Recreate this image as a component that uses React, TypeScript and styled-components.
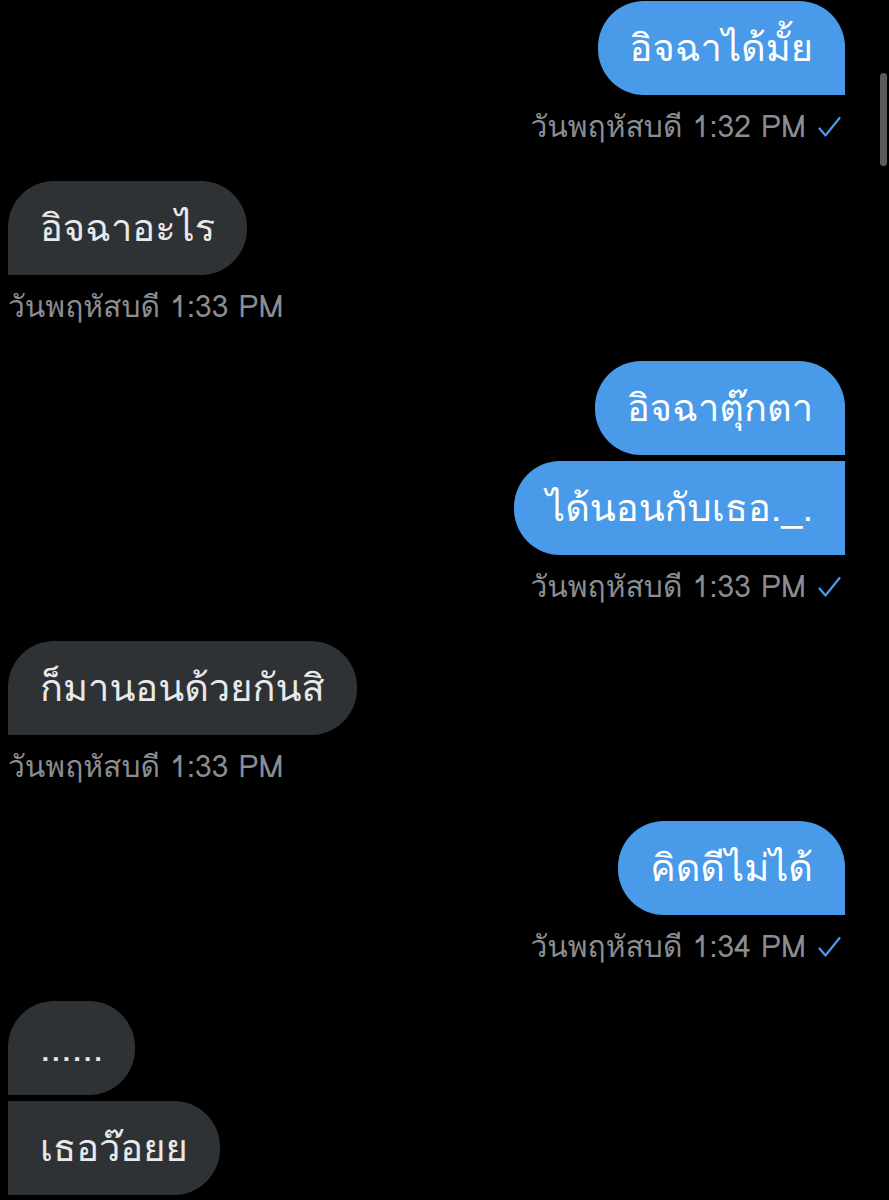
import React from 'react'
import styled, { createGlobalStyle, css } from 'styled-components'

const GlobalStyle = createGlobalStyle`
  html, body {
    margin: 0;
    padding: 0;
    background: #000;
  }
  body {
    font-family: "Loma", "Garuda", "Noto Sans Thai Looped", "Noto Sans Thai", "Noto Sans", "Liberation Sans", sans-serif;
    -webkit-font-smoothing: antialiased;
  }
`

const BLUE = '#4a9aea'
const GREY = '#2f3235'

type Side = 'me' | 'them'
type Place = 'single' | 'first' | 'last'

const Screen = styled.div`
  position: relative;
  width: 889px;
  height: 1200px;
  overflow: hidden;
  background: #000;
`

const Thread = styled.div`
  display: flex;
  flex-direction: column;
  padding: 1px 44px 0 8px;
`

const Group = styled.div<{ $side: Side }>`
  display: flex;
  flex-direction: column;
  gap: 6px;
  align-items: ${({ $side }) => ($side === 'me' ? 'flex-end' : 'flex-start')};
  margin-bottom: 37px;
`

const R = '46px'

const Bubble = styled.div<{ $side: Side; $place: Place }>`
  box-sizing: border-box;
  height: 94px;
  padding: 0 32px;
  display: flex;
  align-items: center;
  font-size: 38px;
  line-height: 1;
  white-space: nowrap;
  color: ${({ $side }) => ($side === 'me' ? '#fff' : '#e7e9ea')};
  background: ${({ $side }) => ($side === 'me' ? BLUE : GREY)};
  border-radius: ${R};
  ${({ $side, $place }) =>
    $side === 'me'
      ? css`
          border-bottom-right-radius: 0;
          ${$place === 'last' && `border-top-right-radius: 0;`}
        `
      : css`
          border-bottom-left-radius: 0;
          ${$place === 'last' && `border-top-left-radius: 0;`}
        `}
`

const Meta = styled.div`
  display: flex;
  align-items: center;
  gap: 12px;
  height: 34px;
  margin-top: 9px;
  font-size: 30px;
  line-height: 34px;
  color: #8a8d91;
  white-space: nowrap;
`

const Scrollbar = styled.div`
  position: absolute;
  top: 73px;
  right: 2px;
  width: 7px;
  height: 93px;
  border-radius: 4px;
  background: #5b5b5d;
`

const Check = () => (
  <svg width="27" height="22" viewBox="0 0 27 22" fill="none">
    <path d="M1.5 12.5 L7.5 19.5 L21.5 2" stroke={BLUE} strokeWidth="2.2" strokeLinecap="round" strokeLinejoin="round" />
  </svg>
)

type Msg = { side: Side; texts: string[]; time: string }

const messages: Msg[] = [
  { side: 'me', texts: ['อิจฉาได้มั้ย'], time: 'วันพฤหัสบดี 1:32 PM' },
  { side: 'them', texts: ['อิจฉาอะไร'], time: 'วันพฤหัสบดี 1:33 PM' },
  { side: 'me', texts: ['อิจฉาตุ๊กตา', 'ได้นอนกับเธอ._.'], time: 'วันพฤหัสบดี 1:33 PM' },
  { side: 'them', texts: ['ก็มานอนด้วยกันสิ'], time: 'วันพฤหัสบดี 1:33 PM' },
  { side: 'me', texts: ['คิดดีไม่ได้'], time: 'วันพฤหัสบดี 1:34 PM' },
  { side: 'them', texts: ['......', 'เธอว๊อยย'], time: '' },
]

export default function App() {
  return (
    <Screen>
      <GlobalStyle />
      <Thread>
        {messages.map((m, i) => (
          <Group key={i} $side={m.side}>
            {m.texts.map((t, j) => (
              <Bubble
                key={j}
                $side={m.side}
                $place={m.texts.length === 1 ? 'single' : j === m.texts.length - 1 ? 'last' : 'first'}
              >
                {t}
              </Bubble>
            ))}
            {m.time && (
              <Meta>
                <span>{m.time}</span>
                {m.side === 'me' && <Check />}
              </Meta>
            )}
          </Group>
        ))}
      </Thread>
      <Scrollbar />
    </Screen>
  )
}
